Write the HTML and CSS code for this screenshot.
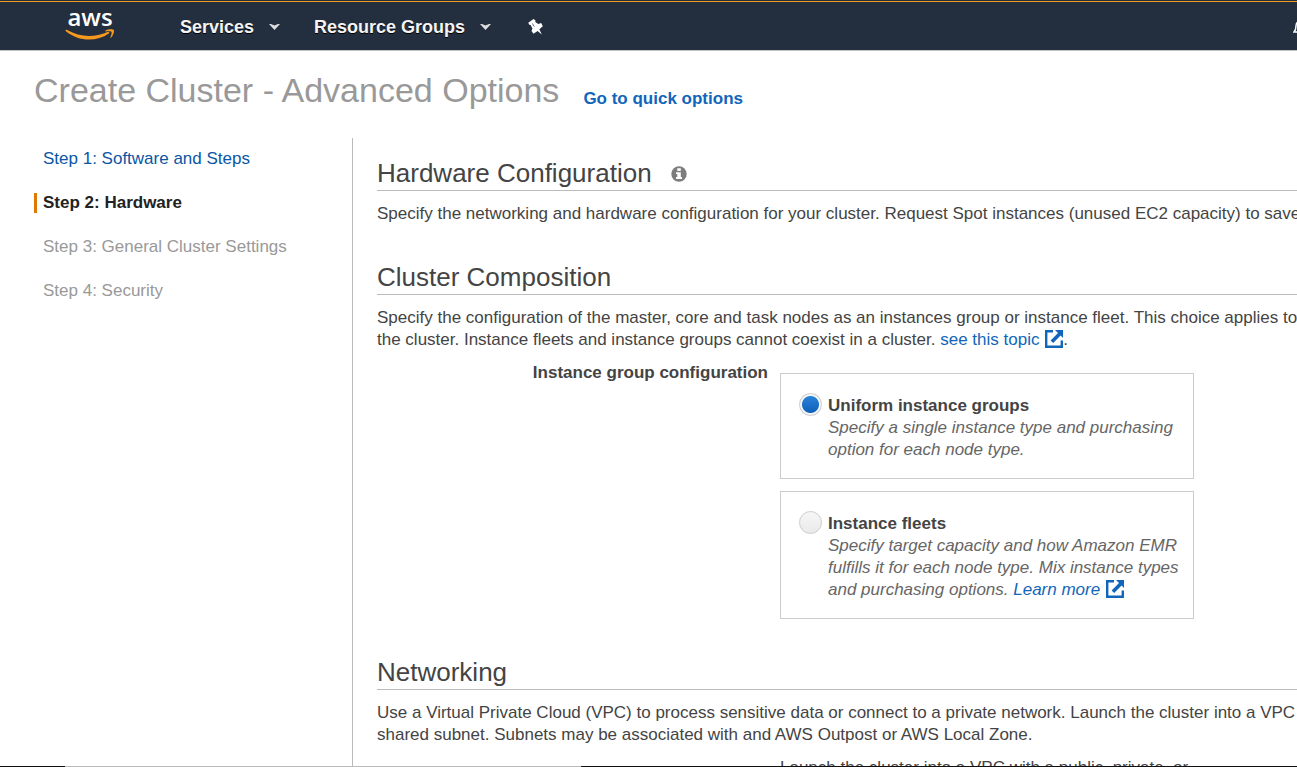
FILE: index.html
```html
<!DOCTYPE html>
<html lang="en">
<head>
<meta charset="utf-8">
<title>Create Cluster - Advanced Options</title>
<link rel="stylesheet" href="styles.css">
</head>
<body>
<svg class="symbols" aria-hidden="true">
  <symbol id="external" viewBox="0 0 18 18">
    <path d="M8 1.200H1.200V16.800H16.800V10.500" fill="none" stroke="currentColor" stroke-width="2.400"/>
    <path d="M10 0H18V8L15.600 5.600L8.200 13L5.600 10.400L13 3Z" fill="currentColor"/>
  </symbol>
</svg>
<header class="topbar">
  <a class="logo" href="#" aria-label="AWS home">
    <span class="logo-word">aws</span>
    <svg class="smile" viewBox="0 0 50 11" aria-hidden="true">
      <path d="M0.500 1.200C0.800 0.600 1.600 0.700 2.200 1.100C15 8.500 29 8.700 42.500 3.100C44.200 2.400 45 3.500 43.800 4.500C31 13.400 13 12.300 0.900 2.200C0.500 1.800 0.300 1.500 0.500 1.200Z" fill="#f7981f"/>
      <path d="M40.500 1.600C43 -0.200 48.200 -0.100 48.900 0.900C49.500 1.900 48.600 6.300 46 8.700C45.500 9.100 45.200 8.800 45.400 8.200C46 6.700 47 3.800 46.500 3C45.900 2.200 43 2.300 41 2.500C40.300 2.600 40 2 40.500 1.600Z" fill="#f7981f"/>
    </svg>
  </a>
  <nav class="menu" aria-label="Main">
    <button class="menu-item" type="button">Services <svg class="caret" viewBox="0 0 11 7" aria-hidden="true"><path d="M0 1H2L5.500 2.500L9 1H11L5.500 7Z" fill="#ddd"/></svg></button>
    <button class="menu-item" type="button">Resource Groups <svg class="caret" viewBox="0 0 11 7" aria-hidden="true"><path d="M0 1H2L5.500 2.500L9 1H11L5.500 7Z" fill="#ddd"/></svg></button>
    <button class="menu-item" type="button" aria-label="Pin shortcuts"><svg class="pin" viewBox="0 0 15 16" aria-hidden="true"><path d="M0.300 3.800L5.500 0L7.500 1.600L7.300 3L10.300 5L13.200 4L14.800 7.200L11.300 10.300L13.800 15.500L9.600 12L5.500 14.700L3.500 12L4.400 9.600L2.600 6L1.200 5.800Z" fill="#fff"/><path d="M4.400 4.500L6.300 7.600" stroke="#232f3e" stroke-width="0.700"/></svg></button>
  </nav>
  <button class="bell-button" type="button" aria-label="Notifications"><svg class="bell" viewBox="0 0 16 16" aria-hidden="true"><path d="M1 13C3 11 3 9 3 7C3 3.500 5 2 8 1.500C11 2 13 3.500 13 7C13 9 13 11 15 13Z" fill="none" stroke="#fff" stroke-width="1.500"/></svg></button>
</header>

<div class="title-row">
  <h1>Create Cluster - Advanced Options</h1>
  <a class="quick" href="#">Go to quick options</a>
</div>

<div class="page">
  <nav class="steps" aria-label="Steps">
    <a class="step" href="#">Step 1: Software and Steps</a>
    <span class="step step-current" aria-current="step">Step 2: Hardware</span>
    <span class="step step-off">Step 3: General Cluster Settings</span>
    <span class="step step-off">Step 4: Security</span>
  </nav>
  <main class="content">
    <section>
      <h2>Hardware Configuration <svg class="info" viewBox="0 0 16 16" role="img" aria-label="Information"><circle cx="8" cy="8" r="7.700" fill="#7d7d7d"/><path d="M6.300 2.300H9.800V5H6.300ZM5 6.200H9.800V11H11V13H5V11H6.300V8H5Z" fill="#fff"/></svg></h2>
      <p>Specify the networking and hardware configuration for your cluster. Request Spot instances (unused EC2 capacity) to save money.</p>
    </section>
    <section>
      <h2>Cluster Composition</h2>
      <p>Specify the configuration of the master, core and task nodes as an instances group or instance fleet. This choice applies to all<br>the cluster. Instance fleets and instance groups cannot coexist in a cluster. <a href="#">see this topic <svg class="external"><use href="#external"/></svg></a>.</p>
      <div class="field" role="radiogroup" aria-labelledby="group-label">
        <div class="field-label" id="group-label">Instance group configuration</div>
        <div class="options">
          <div class="option">
            <input type="radio" name="group" id="uniform" checked>
            <div class="option-text">
              <label for="uniform">Uniform instance groups</label>
              <div class="hint">Specify a single instance type and purchasing option for each node type.</div>
            </div>
          </div>
          <div class="option">
            <input type="radio" name="group" id="fleets">
            <div class="option-text">
              <label for="fleets">Instance fleets</label>
              <div class="hint">Specify target capacity and how Amazon EMR fulfills it for each node type. Mix instance types and purchasing options. <a href="#">Learn more <svg class="external"><use href="#external"/></svg></a></div>
            </div>
          </div>
        </div>
      </div>
    </section>
    <section>
      <h2>Networking</h2>
      <p>Use a Virtual Private Cloud (VPC) to process sensitive data or connect to a private network. Launch the cluster into a VPC with<br>shared subnet. Subnets may be associated with and AWS Outpost or AWS Local Zone.</p>
      <div class="field">
        <div class="network-note">Launch the cluster into a VPC with a public, private, or</div>
      </div>
    </section>
  </main>
</div>
<div class="edge"></div>
</body>
</html>
```
FILE: styles.css
```css
* { box-sizing: border-box; }
body {
  margin: 0;
  height: 100vh;
  display: flex;
  flex-direction: column;
  overflow: hidden;
  background: #fff;
  color: #444;
  font: 17px/22px "Liberation Sans", Arial, sans-serif;
}
a { color: #1166bb; text-decoration: none; }
button { border: 0; padding: 0; background: none; color: inherit; font: inherit; }
.symbols { position: absolute; width: 0; height: 0; }

.topbar {
  flex: none;
  display: flex;
  align-items: center;
  height: 51px;
  padding: 3px 0 0 65px;
  background: linear-gradient(#232f3e 1px, #f49b1c 1px, #f49b1c 2px, #232f3e 2px);
  border-bottom: 1px solid #c4c4c4;
  overflow: hidden;
}
.logo { display: flex; flex-direction: column; align-items: center; width: 50px; padding-bottom: 6px; }
.logo-word { color: #fff; font: 24px/18px "Open Sans", "Noto Sans", sans-serif; font-weight: 600; }
.smile { width: 50px; height: 11px; margin-top: 3px; }
.menu { display: flex; align-items: center; gap: 34px; margin-left: 65px; }
.menu-item {
  display: flex;
  align-items: center;
  gap: 15px;
  color: #f4f4f4;
  font-size: 18px;
  font-weight: bold;
  line-height: 22px;
  text-shadow: 0 1px 0 #000;
}
.caret { width: 11px; height: 7px; }
.pin { width: 15px; height: 16px; margin-left: 3px; }
.bell-button { flex: none; margin-left: auto; margin-right: -12px; }
.bell { display: block; width: 16px; height: 16px; }

.title-row { flex: none; display: flex; align-items: flex-end; gap: 24px; padding: 19px 34px 0; }
h1 { margin: 0; color: #999; font-size: 34px; line-height: 40px; font-weight: normal; }
.quick { font-weight: bold; }

.page { flex: 1; display: flex; min-height: 0; margin-top: 28px; }
.steps {
  flex: none;
  display: flex;
  flex-direction: column;
  gap: 24px;
  width: 353px;
  padding: 11px 0 0 34px;
  border-right: 1px solid #bbb;
}
.step { padding-left: 6px; border-left: 3px solid transparent; line-height: 20px; color: #0a56a5; }
.step-current { border-color: #e07700; color: #222; font-weight: bold; }
.step-off { color: #999; }

.content { flex: 1; min-width: 0; padding: 19px 0 0 24px; overflow: hidden; white-space: nowrap; }
section { margin-bottom: 36px; }
h2 {
  margin: 0 0 12px;
  padding-bottom: 1px;
  border-bottom: 1px solid #bbb;
  font-size: 26px;
  line-height: 32px;
  font-weight: normal;
}
p { margin: 0; }
.info { width: 16px; height: 16px; margin-left: 12px; vertical-align: 0; }
.external { width: 18px; height: 18px; margin-left: 1px; vertical-align: -3px; }
.field { display: grid; grid-template-columns: 391px 414px; column-gap: 12px; margin-top: 11px; }
.field-label { font-weight: bold; text-align: right; }
.options { display: grid; gap: 12px; padding: 11px 0 1px; }
.option { display: flex; gap: 6px; padding: 19px 12px 17px 18px; border: 1px solid #ccc; white-space: normal; }
.option-text { padding-top: 2px; }
.option label { display: block; font-weight: bold; }
.hint { color: #666; font-style: italic; }
input[type="radio"] {
  appearance: none;
  flex: none;
  width: 23px;
  height: 23px;
  margin: 0;
  border: 1px solid #ccc;
  border-radius: 50%;
  background: linear-gradient(#f6f6f6, #eaeaea);
}
input[type="radio"]:checked {
  background: radial-gradient(circle, transparent 8px, #f6f6f6 9px), linear-gradient(#2c86dc, #0c5cb4);
}
.network-note { grid-column: 2; }
.edge {
  position: fixed;
  left: 0;
  right: 0;
  bottom: 0;
  height: 1px;
  background: linear-gradient(90deg, #111 65px, #bbb 65px, #bbb 581px, #111 581px);
}
```
